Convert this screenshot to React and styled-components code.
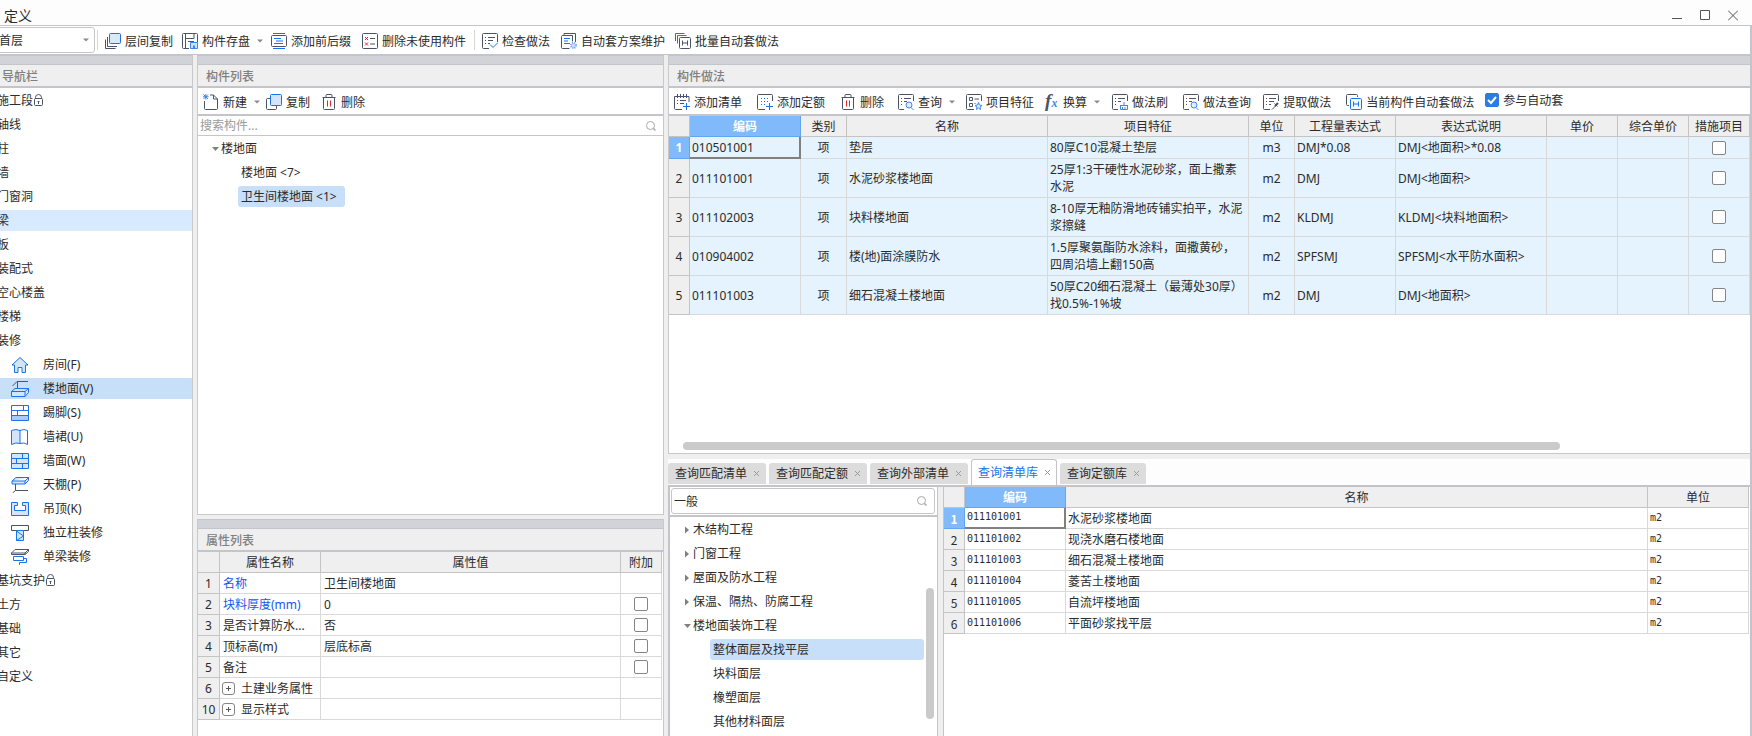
import { useState } from "react";
import styled, { createGlobalStyle } from "styled-components";

const GlobalStyle = createGlobalStyle`
  :root {
    --text-color: #2b2b2b;
    --muted-color: #808080;
    --line-color: #c3c5ca;
    --cell-line: #d9d9d9;
    --head-line: #c4c4c4;
    --panel-gray: #efefef;
    --strip-color: #d1d3d9;
    --select-color: #c8dffa;
    --accent-color: #1a73e8;
  }

  *, *::before, *::after {
    box-sizing: border-box;
  }

  body {
    margin: 0;
    background-color: #fff;
    color: var(--text-color);
    font-family: "Noto Sans", "Noto Sans CJK SC", sans-serif;
    font-size: 12px;
    line-height: 17px;
    overflow: hidden;
  }

  button, input, select {
    font: inherit;
    color: inherit;
  }

  button {
    margin: 0;
    padding: 0;
    border: 0;
    background: none;
    text-align: left;
  }

  ul {
    margin: 0;
    padding: 0;
    list-style: none;
  }
`;

/* ------------------------------------------------------------------------------------------ */

const Window = styled.div`
  display: flex;
  flex-direction: column;
  min-height: 100vh;
`;

const TitleBar = styled.header`
  display: flex;
  align-items: flex-end;
  justify-content: space-between;
  height: 26px;
  padding: 0 14px 0 4px;
  background-color: #fdfdfd;
  border-bottom: 1px solid var(--line-color);
`;

const WindowTitle = styled.h1`
  margin: 0;
  font-size: 14px;
  font-weight: 400;
  line-height: 18px;
`;

const WindowButtons = styled.div`
  display: flex;
  gap: 18px;
  padding-bottom: 4px;

  button {
    display: flex;
    width: 10px;
    height: 11px;
  }
`;

const WindowBody = styled.div`
  display: flex;
  flex-direction: column;
  flex: 1;
  border-right: 2px solid var(--line-color);
`;

const MainToolbar = styled.div`
  display: flex;
  align-items: center;
  height: 29px;
  border-bottom: 1px solid var(--line-color);
`;

const Columns = styled.main`
  display: grid;
  grid-template-columns: 193px 467px minmax(0, 1fr);
  column-gap: 4px;
  flex: 1;
  background-color: var(--panel-gray);
`;

/* ------------------------------------------------------------------------------------------ */

const Divider = styled.span`
  width: 1px;
  height: 20px;
  margin-right: 7px;
  background-color: #d6d6d6;
`;

const Toolbar = styled.div`
  display: flex;
  align-items: center;
  height: 28px;
  padding: 0 5px;
  background-color: #fff;
  border-bottom: 2px solid var(--line-color);
`;

const ToolButtonBase = styled.button`
  display: flex;
  align-items: center;
  flex: none;
  gap: 4px;
  height: 24px;
  padding-top: 2px;
  margin-right: ${({ $gap }) => $gap}px;
  white-space: nowrap;

  svg {
    flex: none;
  }
`;

const Fx = styled.span`
  width: 14px;
  font-family: "Liberation Serif", serif;
  font-size: 19px;
  font-style: italic;
  font-weight: 700;
  color: #4a5466;

  small {
    font-size: 12px;
    color: #3c87f0;
  }
`;

const Caret = () => (
  <svg width="10" height="6" viewBox="0 0 10 6">
    <path d="M3 1.5h6L6 4.5z" fill="#8a8a8a" />
  </svg>
);

const ToolButton = ({ icon, label, caret, gap = 10 }) => {
  return (
    <ToolButtonBase type="button" $gap={gap}>
      {icon === "fx" ? (
        <Fx aria-hidden="true">
          f<small>x</small>
        </Fx>
      ) : (
        <Icon name={icon} />
      )}
      {label}
      {caret && <Caret />}
    </ToolButtonBase>
  );
};

/* ------------------------------------------------------------------------------------------ */

const D = "#4a5466";
const B = "#1a73e8";

const ICONS = {
  layerCopy: (
    <>
      <path d="M.5 6.5v9h10M2.5 4v9.500h9.500" stroke={D} />
      <rect x="4.500" y=".5" width="11" height="10" rx="1" stroke={B} fill="#d9e8fd" />
    </>
  ),
  save: (
    <>
      <path d="M7 15.500h-5.500a1 1 0 0 1-1-1v-13a1 1 0 0 1 1-1h13a1 1 0 0 1 1 1V9M3.500.5v15M3.500 5.500h8.500V.5M6 8.500h6" stroke={D} />
      <path d="M8.500 9.500h7v6h-7z" stroke="#3c87f0" fill="#cfe1fc" />
      <path d="M11 12.500h2v3h-2z" fill="#3c87f0" />
    </>
  ),
  prefix: (
    <>
      <path d="M2 .5h12M2 15.500h12M3 5.500h7M5 8h7M3 10.500h9" stroke={B} />
      <rect x=".5" y="2.500" width="15" height="11" rx="1" stroke={D} />
    </>
  ),
  removeUnused: (
    <>
      <rect x=".5" y=".5" width="15" height="15" rx="1" stroke={D} />
      <path d="M3 4l3 3M6 4l-3 3M3 9.500l3 3M6 9.500l-3 3" stroke="#e0262b" />
      <path d="M8 5.500h5M8 11h5" stroke={D} />
    </>
  ),
  check: (
    <>
      <path d="M7 15.500H1.500a1 1 0 0 1-1-1v-13a1 1 0 0 1 1-1h13a1 1 0 0 1 1 1V9M3 4.500h1M6 4.500h7M3 7.500h1M6 7.500h5M3 10.500h1M6 10.500h2" stroke={D} />
      <path d="M8 11.500l3 3 5-5" stroke={B} />
    </>
  ),
  scheme: (
    <>
      <path d="M3 2.500v-2h11.500v8.500M8.500 15.500H1.500a1 1 0 0 1-1-1V3.500a1 1 0 0 1 1-1h10v6" stroke={D} />
      <path d="M3 5.500h6M3 8h4M3 10.500h6" stroke={B} />
      <circle cx="12.500" cy="12.500" r="2.500" stroke="#6aa5f5" strokeWidth="2" strokeDasharray="1 1" fill="#cfe1fc" />
    </>
  ),
  batch: (
    <>
      <path d="M.5 8V.5h9M2.500 10.500v-8h9" stroke={B} />
      <rect x="4.500" y="4.500" width="11" height="11" rx="1" stroke={D} />
      <path d="M7.500 7.500v5M12.500 7.500v5M7.500 10h5" stroke={D} />
    </>
  ),
  newFile: (
    <>
      <path d="M1.500 7v7.500a1 1 0 0 0 1 1h11a1 1 0 0 0 1-1V5l-4-4H7M10.500 1v4h4" stroke={D} />
      <path d="M.5 .5l4.500 4.500M5 .5L.5 5M2.750 0v5.500M0 2.750h5.500" stroke="#3c87f0" />
    </>
  ),
  copy: (
    <>
      <path d="M4 4.500H1.500a1 1 0 0 0-1 1v9a1 1 0 0 0 1 1h8a1 1 0 0 0 1-1V12" stroke={D} />
      <rect x="4.500" y=".5" width="11" height="11" rx="1" stroke={B} fill="#d3e4fc" />
    </>
  ),
  trash: (
    <>
      <path d="M1.500 3.500h13M5 3V1.500a1 1 0 0 1 1-1h4a1 1 0 0 1 1 1V3M2.500 3.500v11a1 1 0 0 0 1 1h9a1 1 0 0 0 1-1v-11" stroke={D} />
      <path d="M6.500 6.500v6M9.500 6.500v6" stroke="#e0262b" />
    </>
  ),
  addList: (
    <>
      <path d="M8 15.500H1.500a1 1 0 0 1-1-1v-12h14.500V8M3.500 0v4M6.500 0v4M9.500 0v4M12.500 0v4M3 6.500h1M6 6.500h6M3 9.500h1M6 9.500h4" stroke={D} />
      <path d="M12.500 9v7M9 12.500h7" stroke={B} />
    </>
  ),
  addQuota: (
    <>
      <path d="M8 15.500H1.500a1 1 0 0 1-1-1v-13a1 1 0 0 1 1-1h13a1 1 0 0 1 1 1V7" stroke={D} />
      <path d="M12.500 9v7M9 12.500h7M4 4.500h1M7 4.500h1M10 4.500h1M4 7.500h1M7 7.500h1M10 7.500h1M4 10.500h1M7 10.500h1" stroke={B} />
    </>
  ),
  query: (
    <>
      <path d="M6 15.500H1.500a1 1 0 0 1-1-1v-13a1 1 0 0 1 1-1h13a1 1 0 0 1 1 1V7M3 4.500h1M6 4.500h7M3 7.500h1M6 7.500h3M3 10.500h1" stroke={D} />
      <circle cx="11" cy="11" r="3" stroke="#3c87f0" fill="#e3eefd" />
      <path d="M13 13.500l2.500 2.500" stroke="#3c87f0" />
    </>
  ),
  feature: (
    <>
      <path d="M8 15.500H1.500a1 1 0 0 1-1-1v-13a1 1 0 0 1 1-1h13a1 1 0 0 1 1 1V7M3.500 3.500h3v3h-3zM8.500 5h4.500M3.500 9.500h3v3h-3zM8.500 9.500h1" stroke={D} />
      <path d="M12.500 8.500l1 2.500 2.500.5-2 1.500.5 2.500-2-1.500-2 1.500.5-2.500-2-1.500 2.500-.5z" stroke="#3c87f0" fill="#e3eefd" />
    </>
  ),
  brush: (
    <>
      <path d="M6 15.500H1.500a1 1 0 0 1-1-1v-13a1 1 0 0 1 1-1h13a1 1 0 0 1 1 1V7M3 4.500h1M6 4.500h7M3 7.500h1M6 7.500h3M3 10.500h1" stroke={D} />
      <path d="M12 8v3M8.500 11.500h7M8.500 11v4.500h7V11M10.500 13v2.500M13 13v2.500" stroke="#3c87f0" />
    </>
  ),
  extract: (
    <>
      <path d="M7 15.500H1.500a1 1 0 0 1-1-1v-13a1 1 0 0 1 1-1h13a1 1 0 0 1 1 1V7M3 4.500h1M6 4.500h7M3 7.500h1M6 7.500h5M3 10.500h1M6 10.500h2" stroke={D} />
      <path d="M9 15.500l4-4M11.500 9.500l3 3" stroke={D} />
      <path d="M15 9l-3 3" stroke={D} strokeWidth="2" />
    </>
  ),
  currentAuto: (
    <>
      <path d="M3 11.500H1.500a1 1 0 0 1-1-1v-9a1 1 0 0 1 1-1h9a1 1 0 0 1 1 1V3" stroke={D} />
      <rect x="4.500" y="4.500" width="11" height="11" rx="1" stroke={B} fill="#f2f7ff" />
      <path d="M7.500 7.500v5M12.500 7.500v5M7.500 10h5" stroke={B} />
    </>
  ),
  search: (
    <>
      <circle cx="7.500" cy="7.500" r="4" stroke="#a8a8a8" />
      <path d="M10.500 10.500l2 2" stroke="#a8a8a8" strokeWidth="1.500" />
    </>
  ),
  lock: (
    <>
      <path d="M4.500 6V4.500a3 3 0 0 1 6 0V6" stroke={D} />
      <rect x="3.500" y="5.500" width="8" height="7" rx="1" stroke={D} />
      <path d="M7.500 8v3M6.500 8.500h2" stroke={D} />
    </>
  ),
};

// room-finish icons, drawn on an 18 x 16 grid
const NAV_ICONS = {
  room: (
    <path d="M1 8l8-7.500L17 8h-2.500v7.500h-3.500v-5H7v5H3.500V8z" stroke={B} fill="#d3e4fc" />
  ),
  floor: (
    <>
      <path d="M1.500 5L6 .500h11M6.500 1v6" stroke={D} />
      <path d="M.5 10.500L4 7.500h13.500v4L14 15.500H.5zM.5 10.500H14l3.500-3M14 10.500v5" stroke={B} fill="#d3e4fc" />
    </>
  ),
  skirting: (
    <>
      <path d="M.5 10.500h17v5H.5z" fill="#aacbf8" />
      <path d="M.5.5h17v15H.5zM.5 5.500h17M.5 10.500h17M12.500.5v5M6.500 5.500v5" stroke={B} />
    </>
  ),
  dado: (
    <>
      <path d="M.5 1.500Q5 -.5 9 1.500v13Q5 13 .5 15.500z" fill="#d3e4fc" stroke={B} />
      <path d="M9 1.500Q13 -.5 16.500 1.500v14Q13 13 9 14.500" stroke={B} />
    </>
  ),
  wall: (
    <path d="M.5.500h17v15H.5zM.5 5.500h17M.5 10.500h17M11.500.500v5M5.500 5.500v5M11.500 10.500v5" stroke={B} fill="#d3e4fc" />
  ),
  ceiling: (
    <>
      <path d="M1 4L5 .500h12.500v3L14 7H1zM1 4h13l3.500-3.500M14 4v3" stroke={B} fill="#d3e4fc" />
      <path d="M4.500 7v6.500H17M4.500 13.500L1.500 16" stroke={D} />
    </>
  ),
  suspended: (
    <path d="M.5 1.500h6v3h-3v5h11v-5h-3v-3h6v13H.5z" stroke={B} fill="#d3e4fc" />
  ),
  column: (
    <>
      <path d="M.5.500h17v5H.5z" stroke={D} />
      <path d="M5.500 5.500h7v10h-7zM5.500 6l7 5-7 4.500" stroke={B} fill="#d3e4fc" />
    </>
  ),
  beam: (
    <>
      <path d="M.5 4L4 .500h13.500L14 4H.5v1.500H14l3.500-3V.500M14 4v1.500" stroke={D} />
      <path d="M2.500 7.500h10v4h-10zM12.500 9.500h3v4h-7V16" stroke={B} />
    </>
  ),
};

const Icon = ({ name }) => (
  <svg width="16" height="16" viewBox="0 0 16 16" fill="none" aria-hidden="true">
    {ICONS[name]}
  </svg>
);

const NavIcon = ({ name }) => (
  <svg width="18" height="16" viewBox="0 0 18 16" fill="none" aria-hidden="true">
    {NAV_ICONS[name]}
  </svg>
);

/* ------------------------------------------------------------------------------------------ */

const FloorPicker = styled.div`
  position: relative;
  display: flex;
  margin: 0 2px 0 -4px;

  svg {
    position: absolute;
    top: 10px;
    right: 5px;
    pointer-events: none;
  }
`;

const FloorSelect = styled.select`
  appearance: none;
  width: 99px;
  height: 26px;
  padding: 0 0 0 2px;
  border: 1px solid #c6c6c6;
  border-radius: 3px;
  background-color: #fff;
`;

/* ------------------------------------------------------------------------------------------ */

const Panel = styled.section`
  display: flex;
  flex-direction: column;
  min-height: 0;
  background-color: #fff;
  border: 0 solid #c9c9c9;

  &.nav {
    border-right-width: 1px;
  }

  &.list {
    border-width: 0 1px 1px;
  }

  &.property {
    border-width: 0 1px;
  }

  &.method {
    border-width: 0 0 1px 1px;
  }
`;

const PanelStrip = styled.div`
  flex: none;
  height: 10px;
  background-color: var(--strip-color);
  border: 1px solid var(--line-color);
  border-width: 1px 0;
`;

const PanelTitle = styled.h2`
  flex: none;
  height: 23px;
  margin: 0;
  padding: 3px 8px 0;
  padding-left: ${({ $inset }) => $inset}px;
  background-color: var(--panel-gray);
  border-bottom: 2px solid var(--line-color);
  color: var(--muted-color);
  font-size: 12px;
  font-weight: 500;
`;

const PanelHead = ({ title, inset = 8 }) => (
  <>
    <PanelStrip />
    <PanelTitle $inset={inset}>{title}</PanelTitle>
  </>
);

const Stack = styled.div`
  display: grid;
  grid-template-rows: minmax(0, 1fr) ${({ $bottom }) => $bottom}px;
  row-gap: ${({ $gap }) => $gap}px;
  min-width: 0;
`;

/* ------------------------------------------------------------------------------------------ */

const NavList = styled.ul`
  display: flex;
  flex-direction: column;
  gap: 3px;
  padding-top: 2px;
  overflow: hidden;
`;

const NavButton = styled.button`
  display: flex;
  align-items: center;
  width: 100%;
  height: 21px;
  white-space: nowrap;

  &.group {
    text-indent: -3px;
  }

  &.group svg {
    margin-left: -2px;
  }

  &.child {
    gap: 14px;
    padding-left: 11px;
  }

  &.hover {
    background-color: #d8eaff;
  }

  &.active {
    background-color: var(--select-color);
  }
`;

const NAV = [
  { label: "施工段", lock: true },
  { label: "轴线" },
  { label: "柱" },
  { label: "墙" },
  { label: "门窗洞" },
  { label: "梁", state: "hover" },
  { label: "板" },
  { label: "装配式" },
  { label: "空心楼盖" },
  { label: "楼梯" },
  { label: "装修" },
  { label: "房间(F)", icon: "room" },
  { label: "楼地面(V)", icon: "floor", state: "active" },
  { label: "踢脚(S)", icon: "skirting" },
  { label: "墙裙(U)", icon: "dado" },
  { label: "墙面(W)", icon: "wall" },
  { label: "天棚(P)", icon: "ceiling" },
  { label: "吊顶(K)", icon: "suspended" },
  { label: "独立柱装修", icon: "column" },
  { label: "单梁装修", icon: "beam" },
  { label: "基坑支护", lock: true },
  { label: "土方" },
  { label: "基础" },
  { label: "其它" },
  { label: "自定义" },
];

const Navigation = () => (
  <Panel className="nav">
    <PanelHead title="导航栏" inset={2} />
    <NavList>
      {NAV.map(({ label, icon, lock, state = "" }) => (
        <li key={label}>
          <NavButton type="button" className={`${icon ? "child" : "group"} ${state}`}>
            {icon && <NavIcon name={icon} />}
            {label}
            {lock && <Icon name="lock" />}
          </NavButton>
        </li>
      ))}
    </NavList>
  </Panel>
);

/* ------------------------------------------------------------------------------------------ */

const SearchBox = styled.label`
  display: flex;
  align-items: center;
  flex: none;
  height: 20px;
  padding: 0 4px 0 2px;
  border: 0 solid #c6c6c6;
  border-bottom-width: 1px;
  background-color: #fff;

  &.boxed {
    height: 26px;
    margin: 1px 2px 1px 1px;
    border-width: 1px;
    border-radius: 3px;
  }

  input {
    flex: 1;
    min-width: 0;
    height: 18px;
    padding: 0;
    border: 0;
    outline: 0;
    background: none;
  }

  input::placeholder {
    color: #9a9a9a;
    opacity: 1;
  }
`;

const TreeList = styled.ul`
  display: flex;
  flex-direction: column;
  gap: 3px;
  padding-top: 2px;
  flex: 1;
  min-width: 0;
`;

const TreeButton = styled.button`
  display: flex;
  align-items: center;
  height: 21px;
  margin-left: ${({ $indent }) => $indent}px;
  padding: 0 8px 0 3px;
  border-radius: 3px;
  white-space: nowrap;
  background-color: ${({ $active }) => ($active ? "var(--select-color)" : "transparent")};

  &.wide {
    width: calc(100% - 42px);
  }
`;

const Arrow = ({ open }) => (
  <svg width="10" height="10" viewBox="0 0 10 10" aria-hidden="true">
    <path d={open ? "M1 3h7L4.500 7z" : "M2 1.500v7L6 5z"} fill="#808080" />
  </svg>
);

const ComponentList = () => (
  <Panel className="list">
    <PanelHead title="构件列表" />
    <Toolbar>
      <ToolButton icon="newFile" label="新建" caret gap={5} />
      <ToolButton icon="copy" label="复制" gap={11} />
      <ToolButton icon="trash" label="删除" />
    </Toolbar>
    <SearchBox>
      <input type="text" placeholder="搜索构件..." aria-label="搜索构件" />
      <Icon name="search" />
    </SearchBox>
    <TreeList>
      <li>
        <TreeButton type="button" $indent={10}>
          <Arrow open />
          楼地面
        </TreeButton>
      </li>
      <li>
        <TreeButton type="button" $indent={40}>
          楼地面 &lt;7&gt;
        </TreeButton>
      </li>
      <li>
        <TreeButton type="button" $indent={40} $active>
          卫生间楼地面 &lt;1&gt;
        </TreeButton>
      </li>
    </TreeList>
  </Panel>
);

/* ------------------------------------------------------------------------------------------ */

const TableWrap = styled.div`
  flex: 1;
  min-width: 0;
  padding-right: ${({ $right = 0 }) => $right}px;
`;

const Table = styled.table`
  width: 100%;
  table-layout: fixed;
  border-collapse: separate;
  border-spacing: 0;

  th,
  td {
    height: 21px;
    padding: 0 3px 0 2px;
    border: solid var(--cell-line);
    border-width: 0 1px 1px 0;
    font-weight: 400;
    text-align: left;
    overflow: hidden;
  }

  th {
    padding: 0;
    border-color: var(--head-line);
    background-color: var(--panel-gray);
    text-align: center;
    white-space: nowrap;
  }

  th.selected {
    background-color: #80bafa;
    border-color: #62a6f2;
    color: #fff;
    font-weight: 700;
  }

  td.center {
    padding: 0;
    text-align: center;
  }

  td.focused {
    border-right: 2px solid #808080;
    border-bottom: 2px solid #808080;
  }

  &.method td {
    background-color: #e5f3ff;
  }

  &.method td.focused {
    height: 22px;
  }

  &.property td {
    padding-left: 3px;
    white-space: nowrap;
    text-overflow: ellipsis;
  }

  &.property td.center {
    padding: 0;
  }

  &.library td {
    padding-bottom: 2px;
  }

  &.library td,
  &.library tbody th {
    font-family: "Noto Sans CJK SC", sans-serif;
  }

  &.library td.code {
    font-family: "DejaVu Sans Mono", monospace;
    font-size: 10px;
  }
`;

const Checkbox = styled.input.attrs({ type: "checkbox" })`
  appearance: none;
  display: block;
  flex: none;
  width: 14px;
  height: 14px;
  margin: 0 auto;
  border: 1px solid #858585;
  border-radius: 2px;
  background-color: #fff;

  &:checked {
    border-color: #2a7de1;
    background: #2a7de1 url("data:image/svg+xml,%3Csvg xmlns='http://www.w3.org/2000/svg' viewBox='0 0 12 12'%3E%3Cpath d='M2 6l3 3 5-6' fill='none' stroke='white' stroke-width='2'/%3E%3C/svg%3E");
  }
`;

const ExpandLabel = styled.span`
  display: flex;
  align-items: center;
  gap: 6px;
`;

const ExpandButton = styled.button`
  display: flex;
  width: 13px;
  height: 13px;
  margin-left: -1px;
  border: 1px solid #858585;
  border-radius: 3px;
`;

const PropertyName = styled.span`
  color: ${({ $link }) => ($link ? "#1456f0" : "inherit")};
`;

const PROPERTIES = [
  { no: 1, name: "名称", value: "卫生间楼地面", link: true },
  { no: 2, name: "块料厚度(mm)", value: "0", link: true, extra: true },
  { no: 3, name: "是否计算防水...", value: "否", extra: true },
  { no: 4, name: "顶标高(m)", value: "层底标高", extra: true },
  { no: 5, name: "备注", value: "", extra: true },
  { no: 6, name: "土建业务属性", value: "", group: true },
  { no: 10, name: "显示样式", value: "", group: true },
];

const PropertyList = () => (
  <Panel className="property">
    <PanelHead title="属性列表" />
    <TableWrap $right={1}>
      <Table className="property">
        <colgroup>
          <col width="22" />
          <col width="101" />
          <col />
          <col width="41" />
        </colgroup>
        <thead>
          <tr>
            <th />
            <th scope="col">属性名称</th>
            <th scope="col">属性值</th>
            <th scope="col">附加</th>
          </tr>
        </thead>
        <tbody>
          {PROPERTIES.map(({ no, name, value, link, extra, group }) => (
            <tr key={no}>
              <th scope="row">{no}</th>
              <td>
                {group ? (
                  <ExpandLabel>
                    <ExpandButton type="button" aria-label={`展开${name}`}>
                      <svg width="11" height="11" viewBox="0 0 11 11">
                        <path d="M3 5.500h5M5.500 3v5" stroke="#555" />
                      </svg>
                    </ExpandButton>
                    {name}
                  </ExpandLabel>
                ) : (
                  <PropertyName $link={link}>{name}</PropertyName>
                )}
              </td>
              <td>{value}</td>
              <td className="center">{extra && <Checkbox aria-label={`附加 ${name}`} />}</td>
            </tr>
          ))}
        </tbody>
      </Table>
    </TableWrap>
  </Panel>
);

/* ------------------------------------------------------------------------------------------ */

const AutoLabel = styled.label`
  display: flex;
  align-items: center;
  flex: none;
  gap: 4px;
  padding-bottom: 2px;
  white-space: nowrap;
`;

const HScroll = styled.div`
  flex: none;
  padding: 0 190px 3px 14px;

  span {
    display: block;
    height: 8px;
    border-radius: 4px;
    background-color: #cacaca;
  }
`;

const METHODS = [
  ["010501001", "垫层", "80厚C10混凝土垫层", "m3", "DMJ*0.08", "DMJ<地面积>*0.08"],
  ["011101001", "水泥砂浆楼地面", "25厚1:3干硬性水泥砂浆，面上撒素水泥", "m2", "DMJ", "DMJ<地面积>"],
  ["011102003", "块料楼地面", "8-10厚无釉防滑地砖铺实拍平，水泥浆擦缝", "m2", "KLDMJ", "KLDMJ<块料地面积>"],
  ["010904002", "楼(地)面涂膜防水", "1.5厚聚氨酯防水涂料，面撒黄砂，四周沿墙上翻150高", "m2", "SPFSMJ", "SPFSMJ<水平防水面积>"],
  ["011101003", "细石混凝土楼地面", "50厚C20细石混凝土（最薄处30厚）找0.5%-1%坡", "m2", "DMJ", "DMJ<地面积>"],
];

const METHOD_COLUMNS = [
  ["类别", 46],
  ["名称"],
  ["项目特征"],
  ["单位", 46],
  ["工程量表达式", 101],
  ["表达式说明", 151],
  ["单价", 71],
  ["综合单价", 71],
  ["措施项目", 61],
];

// two-line rows are taller than the text alone
const MethodRow = styled.tr`
  height: ${({ $tall }) => ($tall ? 39 : 22)}px;
`;

const MethodPanel = () => {
  const [auto, setAuto] = useState(true);

  return (
    <Panel className="method">
      <PanelHead title="构件做法" />
      <Toolbar>
        <ToolButton icon="addList" label="添加清单" gap={15} />
        <ToolButton icon="addQuota" label="添加定额" gap={15} />
        <ToolButton icon="trash" label="删除" gap={14} />
        <ToolButton icon="query" label="查询" caret gap={10} />
        <ToolButton icon="feature" label="项目特征" gap={11} />
        <ToolButton icon="fx" label="换算" caret gap={11} />
        <ToolButton icon="brush" label="做法刷" gap={15} />
        <ToolButton icon="query" label="做法查询" gap={12} />
        <ToolButton icon="extract" label="提取做法" gap={15} />
        <ToolButton icon="currentAuto" label="当前构件自动套做法" gap={11} />
        <AutoLabel>
          <Checkbox checked={auto} onChange={() => setAuto(!auto)} />
          参与自动套
        </AutoLabel>
      </Toolbar>
      <TableWrap>
        <Table className="method">
          <colgroup>
            <col width="21" />
            <col width="111" />
            {METHOD_COLUMNS.map(([label, width]) => (
              <col key={label} width={width} />
            ))}
          </colgroup>
          <thead>
            <tr>
              <th />
              <th scope="col" className="selected">
                编码
              </th>
              {METHOD_COLUMNS.map(([label]) => (
                <th key={label} scope="col">
                  {label}
                </th>
              ))}
            </tr>
          </thead>
          <tbody>
            {METHODS.map(([code, name, feature, unit, expr, note], i) => (
              <MethodRow key={code} $tall={i > 0}>
                <th scope="row" className={i === 0 ? "selected" : undefined}>
                  {i + 1}
                </th>
                <td className={i === 0 ? "focused" : undefined}>{code}</td>
                <td className="center">项</td>
                <td>{name}</td>
                <td>{feature}</td>
                <td className="center">{unit}</td>
                <td>{expr}</td>
                <td>{note}</td>
                <td />
                <td />
                <td className="center">
                  <Checkbox aria-label={`措施项目 ${name}`} />
                </td>
              </MethodRow>
            ))}
          </tbody>
        </Table>
      </TableWrap>
      <HScroll>
        <span />
      </HScroll>
    </Panel>
  );
};

/* ------------------------------------------------------------------------------------------ */

const QueryPanel = styled.section`
  display: flex;
  flex-direction: column;
  background-color: #fff;
`;

const TabBar = styled.div`
  display: flex;
  align-items: flex-end;
  gap: 3px;
  height: 28px;
  background-color: #fdfdfd;
  border-bottom: 2px solid #c4c4c8;
`;

const Tab = styled.div`
  display: flex;
  align-items: center;
  gap: 5px;
  height: 21px;
  margin-bottom: 1px;
  padding: 0 5px 0 7px;
  border-radius: 3px 3px 0 0;
  background-color: #dcdcdc;
  white-space: nowrap;

  &.active {
    height: 26px;
    margin-bottom: 0;
    border: 1px solid #c4c4c8;
    border-bottom: 0;
    padding: 0 4px 0 6px;
    background-color: #fff;
    color: var(--accent-color);
  }

  button {
    display: flex;
  }
`;

const TABS = ["查询匹配清单", "查询匹配定额", "查询外部清单", "查询清单库", "查询定额库"];

const QueryBody = styled.div`
  display: grid;
  grid-template-columns: 270px minmax(0, 1fr);
  column-gap: 5px;
  flex: 1;
  background-color: var(--panel-gray);
`;

const Pane = styled.div`
  display: flex;
  flex-direction: column;
  min-width: 0;
  background-color: #fff;
  border: solid var(--line-color);
  border-width: ${({ $tree }) => ($tree ? "0 1px 0 2px" : "0 0 0 1px")};
`;

const TreeScroll = styled.div`
  display: flex;
  flex: 1;
  border-top: 2px solid var(--line-color);
`;

const VScroll = styled.div`
  width: 11px;
  padding: 71px 3px 17px 0;

  span {
    display: block;
    height: 100%;
    border-radius: 4px;
    background-color: #cacaca;
  }
`;

const CHAPTERS = ["木结构工程", "门窗工程", "屋面及防水工程", "保温、隔热、防腐工程"];
const SECTIONS = ["整体面层及找平层", "块料面层", "橡塑面层", "其他材料面层"];

const LIBRARY = [
  ["011101001", "水泥砂浆楼地面"],
  ["011101002", "现浇水磨石楼地面"],
  ["011101003", "细石混凝土楼地面"],
  ["011101004", "菱苦土楼地面"],
  ["011101005", "自流坪楼地面"],
  ["011101006", "平面砂浆找平层"],
];

const LibraryQuery = () => {
  const [keyword, setKeyword] = useState("一般");

  return (
    <QueryPanel>
      <TabBar role="tablist">
        {TABS.map((tab) => (
          <Tab key={tab} role="tab" className={tab === "查询清单库" ? "active" : undefined}>
            {tab}
            <button type="button" aria-label={`关闭${tab}`}>
              <svg width="9" height="9" viewBox="0 0 9 9">
                <path d="M2 2l5 5M7 2L2 7" stroke="#9a9a9a" />
              </svg>
            </button>
          </Tab>
        ))}
      </TabBar>
      <QueryBody>
        <Pane $tree>
          <SearchBox className="boxed">
            <input
              type="text"
              aria-label="清单库"
              value={keyword}
              onChange={(e) => setKeyword(e.target.value)}
            />
            <Icon name="search" />
          </SearchBox>
          <TreeScroll>
            <TreeList>
              {CHAPTERS.map((chapter) => (
                <li key={chapter}>
                  <TreeButton type="button" $indent={10}>
                    <Arrow />
                    {chapter}
                  </TreeButton>
                </li>
              ))}
              <li>
                <TreeButton type="button" $indent={10}>
                  <Arrow open />
                  楼地面装饰工程
                </TreeButton>
              </li>
              {SECTIONS.map((section, i) => (
                <li key={section}>
                  <TreeButton type="button" className="wide" $indent={40} $active={i === 0}>
                    {section}
                  </TreeButton>
                </li>
              ))}
            </TreeList>
            <VScroll>
              <span />
            </VScroll>
          </TreeScroll>
        </Pane>
        <Pane>
          <TableWrap $right={1}>
            <Table className="library">
              <colgroup>
                <col width="21" />
                <col width="101" />
                <col />
                <col width="101" />
              </colgroup>
              <thead>
                <tr>
                  <th />
                  <th scope="col" className="selected">
                    编码
                  </th>
                  <th scope="col">名称</th>
                  <th scope="col">单位</th>
                </tr>
              </thead>
              <tbody>
                {LIBRARY.map(([code, name], i) => (
                  <tr key={code}>
                    <th scope="row" className={i === 0 ? "selected" : undefined}>
                      {i + 1}
                    </th>
                    <td className={i === 0 ? "code focused" : "code"}>{code}</td>
                    <td>{name}</td>
                    <td className="code">m2</td>
                  </tr>
                ))}
              </tbody>
            </Table>
          </TableWrap>
        </Pane>
      </QueryBody>
    </QueryPanel>
  );
};

/* ------------------------------------------------------------------------------------------ */

const App = () => {
  return (
    <>
      <GlobalStyle />
      <Window>
        <TitleBar>
          <WindowTitle>定义</WindowTitle>
          <WindowButtons>
            <button type="button" aria-label="最小化">
              <svg width="10" height="11" viewBox="0 0 10 11">
                <path d="M0 8.500h10" stroke="#555" />
              </svg>
            </button>
            <button type="button" aria-label="最大化">
              <svg width="10" height="11" viewBox="0 0 10 11">
                <path d="M.5.500h9v9h-9z" stroke="#555" fill="none" />
              </svg>
            </button>
            <button type="button" aria-label="关闭">
              <svg width="10" height="11" viewBox="0 0 10 11">
                <path d="M0 .500l10 10M10 .500l-10 10" stroke="#555" />
              </svg>
            </button>
          </WindowButtons>
        </TitleBar>
        <WindowBody>
          <MainToolbar>
            <FloorPicker>
              <FloorSelect aria-label="楼层" defaultValue="首层">
                <option>首层</option>
              </FloorSelect>
              <Caret />
            </FloorPicker>
            <Divider />
            <ToolButton icon="layerCopy" label="层间复制" gap={9} />
            <ToolButton icon="save" label="构件存盘" caret gap={7} />
            <ToolButton icon="prefix" label="添加前后缀" gap={11} />
            <ToolButton icon="removeUnused" label="删除未使用构件" gap={8} />
            <Divider />
            <ToolButton icon="check" label="检查做法" gap={11} />
            <ToolButton icon="scheme" label="自动套方案维护" gap={10} />
            <ToolButton icon="batch" label="批量自动套做法" />
          </MainToolbar>
          <Columns>
            <Navigation />
            <Stack $bottom={217} $gap={4}>
              <ComponentList />
              <PropertyList />
            </Stack>
            <Stack $bottom={277} $gap={5}>
              <MethodPanel />
              <LibraryQuery />
            </Stack>
          </Columns>
        </WindowBody>
      </Window>
    </>
  );
};

export default App;
